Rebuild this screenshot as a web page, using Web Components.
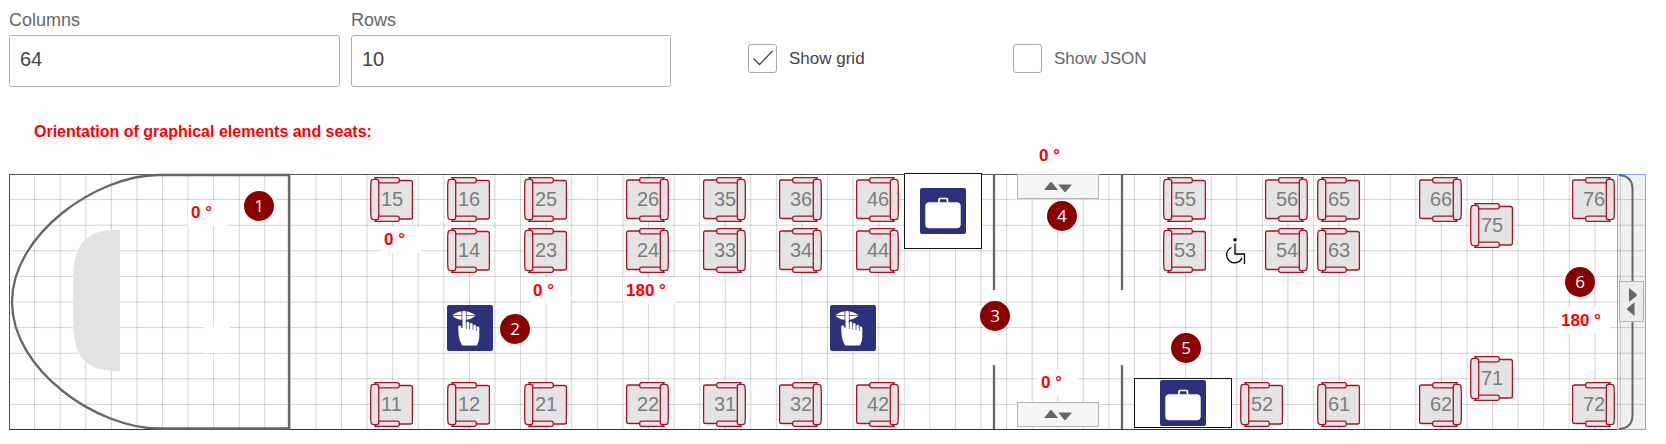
<!DOCTYPE html>
<html lang="en">
<head>
<meta charset="utf-8">
<title>Coach layout</title>
<style>
body{margin:0;background:#fff;font-family:"Liberation Sans",Arial,sans-serif;color:#666}
</style>
</head>
<body>
<layout-page></layout-page>
<script>
// Plan coordinates: 64 x 10 cells drawn on a 1637 x 256 canvas that scales with the window.
const W = 1637, H = 256;
const pctX = v => v / W * 100 + '%';
const pctY = v => v / H * 100 + '%';

const define = (name, html, setup) => customElements.define(name, class extends HTMLElement {
  constructor() {
    super();
    const t = document.createElement('template');
    t.innerHTML = html;
    this.attachShadow({mode: 'open'}).append(t.content.cloneNode(true));
  }
  connectedCallback() {
    const n = a => Number(this.getAttribute(a));
    if (this.hasAttribute('x')) {
      this.style.left = pctX(n('x'));
      this.style.top = pctY(n('y'));
    }
    if (this.hasAttribute('w')) {
      this.style.width = pctX(n('w'));
      this.style.height = pctY(n('h'));
    }
    if (setup) setup(this, this.shadowRoot);
  }
});

const itemCss = ':host{display:block;position:absolute}svg{display:block;width:100%;height:100%;overflow:visible}';

define('number-field', `
<style>
:host{display:block;min-width:0}
label{display:block;font-size:18px;line-height:20px;color:#666;margin-bottom:5px}
input{display:block;box-sizing:border-box;width:100%;height:52px;margin:0;padding:0 10px 4px;border:1px solid #b0b0b0;border-radius:3px;background:#fff;color:#444;font:20px "Liberation Sans",Arial,sans-serif;outline:0}
</style>
<label for="f"></label><input id="f" type="text" inputmode="numeric">`,
(el, r) => {
  r.querySelector('label').textContent = el.getAttribute('label');
  r.querySelector('input').value = el.getAttribute('value');
});

define('check-field', `
<style>
:host{display:block}
label{display:flex;align-items:center;gap:12px;font-size:17px;line-height:20px;color:#666}
:host([checked]) label{color:#444}
input{appearance:none;flex:none;box-sizing:border-box;width:29px;height:29px;margin:0;border:1px solid #aaa;border-radius:3px;background:#fff}
.box{position:relative;display:block;height:29px}
svg{position:absolute;left:0;top:0;display:none}
input:checked + svg{display:block}
</style>
<label><span class="box"><input type="checkbox"><svg width="29" height="29" viewBox="0 0 29 29"><path d="M5.5 14.5l6 6L24.500 7" fill="none" stroke="#444" stroke-width="1.300"/></svg></span><slot></slot></label>`,
(el, r) => { r.querySelector('input').checked = el.hasAttribute('checked'); });

define('coach-seat', `
<style>${itemCss}
.s{fill:#e4e4e4;stroke:#a91226;stroke-width:1.300}
text{font:20px "Liberation Sans",Arial,sans-serif;fill:#7c7c7c}
</style>
<svg viewBox="0 0 43 45">
<g class="s"><rect x="5" y="3.500" width="37.400" height="38.500" rx="2"/>
<path d="M5 .7H27.500a1.800 1.800 0 0 1 1.800 1.800V4a1.800 1.800 0 0 1-1.800 1.800H8.500zM5 44.300H27.500a1.800 1.800 0 0 0 1.800-1.800V41a1.800 1.800 0 0 0-1.800-1.800H8.500z"/>
<path d="M3.500 2.300h2.800q2.400 0 2.400 2.200V40.500q0 2.200-2.400 2.200H3.500Q1.200 42.500 1 40.300L.7 36V9L1 4.700Q1.200 2.500 3.500 2.300z"/></g>
<text x="11" y="29"></text></svg>`,
(el, r) => {
  r.querySelector('text').textContent = el.getAttribute('number');
  if (el.hasAttribute('turned')) r.querySelector('g').setAttribute('transform', 'rotate(180 21.5 22.5)');
});

define('quiet-sign', `
<style>${itemCss}</style>
<svg viewBox="0 0 46 46"><rect width="46" height="46" rx="2" fill="#2c327a"/>
<path d="M5 10.500Q11 6 14.500 6.500Q17 7.200 19.500 6.500Q23 6.500 29 10.500Q23 15 17 15Q10 15 5 10.500z" fill="#fff"/>
<path d="M5 10.500H29" stroke="#2c327a" stroke-width=".7"/>
<path d="M15.300 23V7.500q0-1.800 1.800-1.800t1.800 1.800V18q1.500-2.500 3.200-1V19q2-2 3.600 0v1.500q2.600-1.500 3.300 .5v1q3-1.200 3.300 1V32q0 4-2.300 8.500H15Q12 35 11.600 30L11.200 22q.3-2 2-1.800z" fill="#fff"/>
<path d="M14.900 23V6.500M19.300 6.500V24M22.600 18v6.500M26 20v5M29.300 22v4" fill="none" stroke="#2c327a" stroke-width=".7"/></svg>`);

define('luggage-rack', `
<style>${itemCss}
:host{box-sizing:border-box;border:1px solid #111;background:#fff;display:flex;align-items:center;justify-content:center}
svg{width:46px;height:46px;flex:none}
</style>
<svg viewBox="0 0 46 46"><rect width="46" height="46" rx="2" fill="#2c327a"/>
<rect x="5.300" y="14.300" width="35.400" height="26" rx="4" fill="#fff"/>
<path d="M19 14.500V11.500q0-1 1-1h6.500q1 0 1 1v3" fill="none" stroke="#fff" stroke-width="1.700"/></svg>`);

define('wheelchair-mark', `
<style>${itemCss}</style>
<svg viewBox="0 0 20 26"><circle cx="9" cy="1.700" r="1.700"/><path d="M9 5.500V16H18.500V26M5.500 9.500A8 8 0 1 0 16 20" fill="none" stroke="#000" stroke-width="1.300"/></svg>`);

define('coach-door', `
<style>${itemCss}
:host{box-sizing:border-box;border:1px solid #b5b5b5;background:#f5f5f5;display:flex;align-items:center;justify-content:center}
:host([upright]){background:#ececec}
svg{width:28px;height:10px;flex:none}
:host([upright]) svg{transform:rotate(90deg)}
</style>
<svg viewBox="0 0 28 10" fill="#666"><path d="M0 8L6 .5Q7 -.5 8 .5L14 8zM14.300 2.500H28L21.800 9.800Q21 10.600 20.200 9.800z"/></svg>`);

define('step-badge', `
<style>
:host{position:absolute;display:flex;align-items:center;justify-content:center;width:30px;height:30px;margin:-15px 0 0 -15px;border-radius:50%;background:#8b0000;color:#fff;font:17px/30px "Open Sans",sans-serif}
</style><slot></slot>`);

define('angle-note', `
<style>
:host{position:absolute;display:block;box-sizing:border-box;min-width:40px;height:26px;padding:0 3px;background:#fff;color:#f00;font:bold 17px/26px "Liberation Sans",Arial,sans-serif;white-space:nowrap}
:host([wide]){width:52px}
:host([blank]){min-width:26px}
</style><slot></slot>`);

// Hull of the coach: cell lines, nose, console, walls and tail.
const lines = () => {
  let d = '';
  for (let i = 1; i < 64; i++) d += `M${i * W / 64} 0V${H}`;
  for (let i = 1; i < 10; i++) d += `M0 ${i * H / 10}H${W}`;
  return d;
};
define('coach-hull', `
<style>${itemCss}:host{inset:0}</style>
<svg viewBox="0 0 ${W} ${H}" fill="none">
<path d="${lines()}" stroke="#000" stroke-opacity=".17"/>
<path d="M.5 0V255.500M0 .5H${W}" stroke="#555"/><path d="M0 255.500H${W}" stroke="#333"/>
<path d="M111 56H105C72 57 64 76 64 108V145C64 177 72 196 105 197H111z" fill="#e3e3e3"/>
<path d="M280 1H150C88 1 3 60 3 128S88 254.500 150 254.500H280z" stroke="#666" stroke-width="2.300"/>
<path d="M985 0V116M985 191V255M1113 0V116M1113 191V255" stroke="#666" stroke-width="2.300"/>
<rect x="1608.500" y=".5" width="28" height="255" fill="#000" fill-opacity=".06" stroke="#7fb0ec"/>
<path d="M1610 1Q1623 2 1623.500 14V242Q1623 254 1610 255" stroke="#666" stroke-width="2"/>
</svg>`);

const seat = (n, col, row, turned) =>
  `<coach-seat number="${n}" x="${(col * W / 64 + 3).toFixed(1)}" y="${(row * H / 10 + 3).toFixed(1)}" w="43" h="45"${turned ? ' turned' : ''}></coach-seat>`;
const seats = [
  [15,14,0],[16,17,0],[25,20,0],[26,24,0,1],[35,27,0,1],[36,30,0,1],[46,33,0,1],
  [14,17,2],[23,20,2],[24,24,2,1],[33,27,2,1],[34,30,2,1],[44,33,2,1],
  [11,14,8],[12,17,8],[21,20,8],[22,24,8,1],[31,27,8,1],[32,30,8,1],[42,33,8,1],
  [55,45,0],[56,49,0,1],[65,51,0],[66,55,0,1],[76,61,0,1],[75,57,1],
  [53,45,2],[54,49,2,1],[63,51,2],
  [52,48,8],[61,51,8],[62,55,8,1],[71,57,7],[72,61,8,1]
].map(s => seat(...s)).join('');

define('coach-plan', `
<style>:host{display:block;position:relative;aspect-ratio:${W}/${H}}</style>
<coach-hull></coach-hull>
<angle-note x="179" y="26">0 °</angle-note>
<angle-note x="372" y="53">0 °</angle-note>
<angle-note x="521" y="104">0 °</angle-note>
<angle-note wide x="614" y="104">180 °</angle-note>
<angle-note x="1027" y="-31">0 °</angle-note>
<angle-note x="1029" y="196">0 °</angle-note>
<angle-note wide x="1549" y="134">180 °</angle-note>
<angle-note blank x="195" y="153"></angle-note>
${seats}
<quiet-sign x="438" y="131" w="46" h="46"></quiet-sign>
<quiet-sign x="821" y="131" w="46" h="46"></quiet-sign>
<luggage-rack x="895" y="-1" w="78" h="76"></luggage-rack>
<luggage-rack x="1125" y="204" w="98" h="50"></luggage-rack>
<coach-door x="1008" y="0" w="82" h="25"></coach-door>
<coach-door x="1008" y="228" w="82" h="25"></coach-door>
<coach-door upright x="1610" y="107" w="25" h="41"></coach-door>
<wheelchair-mark x="1217" y="64" w="20" h="26"></wheelchair-mark>
<step-badge x="250" y="32">1</step-badge>
<step-badge x="506" y="155">2</step-badge>
<step-badge x="986" y="142">3</step-badge>
<step-badge x="1053" y="42">4</step-badge>
<step-badge x="1177" y="174">5</step-badge>
<step-badge x="1571" y="108">6</step-badge>`);

define('layout-page', `
<style>
:host{display:block;padding:10px 20px 14px 9px}
form{display:grid;grid-template-columns:331fr 320fr 55fr 254fr 633fr;column-gap:11px;margin:0}
check-field{margin-top:34px}
.third{grid-column:4}
h1{margin:34px 0 31px 25px;font:bold 16px/22px "Liberation Sans",Arial,sans-serif;color:#f00}
</style>
<form>
<number-field label="Columns" value="64"></number-field>
<number-field label="Rows" value="10"></number-field>
<check-field class="third" checked>Show grid</check-field>
<check-field>Show JSON</check-field>
</form>
<h1>Orientation of graphical elements and seats:</h1>
<coach-plan></coach-plan>`);
</script>
</body>
</html>
